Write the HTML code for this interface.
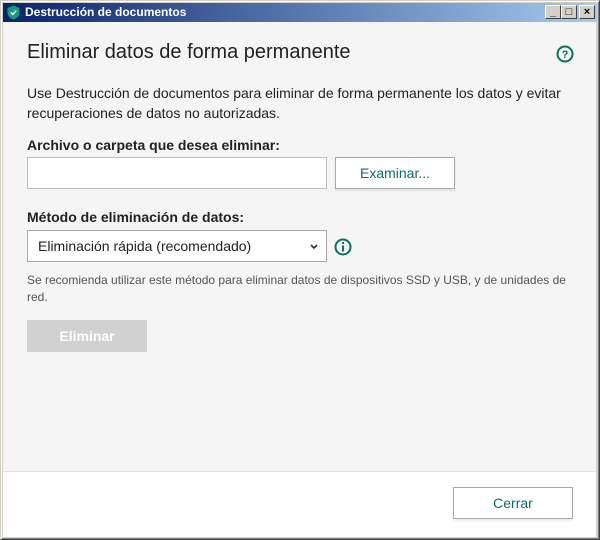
<!DOCTYPE html>
<html><head><meta charset="utf-8"><style>
*{box-sizing:border-box;margin:0;padding:0}
body{width:600px;height:540px;background:#d4d0c8;font-family:"Liberation Sans",sans-serif;position:relative;overflow:hidden}
.frame{position:absolute;left:0;top:0;width:600px;height:540px;border:1px solid #d4d0c8;border-right-color:#404040;border-bottom-color:#404040;box-shadow:inset 1px 1px 0 #fff,inset -1px -1px 0 #808080}
.title{position:absolute;left:3px;top:3px;width:594px;height:19px;background:linear-gradient(90deg,#0a246a,#a6caf0);color:#fff;font-weight:bold;font-size:12px;line-height:19px;padding-left:22px}
.shield{position:absolute;left:4px;top:2px}
.btns{position:absolute;right:2px;top:2px;display:flex;gap:0}
.wb{width:16px;height:14px;background:#d4d0c8;border:1px solid;border-color:#fff #404040 #404040 #fff;font-size:11px;color:#000;text-align:center;line-height:12px;font-weight:bold}
.content{position:absolute;left:3px;top:22px;width:593px;height:449px;background:#f5f5f5}
.footer{position:absolute;left:3px;top:471px;width:593px;height:66px;background:#fff;border-top:1px solid #e2e2e2}
.abs{position:absolute}
h1{position:absolute;left:27px;top:41px;font-size:20px;font-weight:normal;color:#222}
.t{color:#222;font-size:14px}
.input{background:#fff;border:1px solid #bdbdbd}
.btn{background:#fff;border:1px solid #a8a8a8;color:#0d6f69;font-size:14px;text-align:center;box-shadow:0 2px 2px rgba(0,0,0,.08)}
</style></head><body>
<div class="frame"></div>
<div class="title"><svg class="shield" width="13" height="15" viewBox="0 0 13 15"><path d="M6.5 0.5L12.5 3V8C12.5 11 9.5 13.5 6.5 14.5C3.5 13.5 0.5 11 0.5 8V3Z" fill="#1a9a7a"/><path d="M3.8 7.5L5.8 9.5L9.3 5.5" stroke="#fff" stroke-width="1.4" fill="none"/></svg>Destrucción de documentos
<div class="btns"><div class="wb">_</div><div class="wb" style="margin-right:2px">□</div><div class="wb">×</div></div></div>
<div class="content"></div>
<div class="footer"></div>
<h1>Eliminar datos de forma permanente</h1>
<svg class="abs" style="left:556px;top:45px" width="18" height="18" viewBox="0 0 18 18"><circle cx="9" cy="9" r="7.5" fill="none" stroke="#0d6f5c" stroke-width="2"/><text x="9" y="13" text-anchor="middle" font-size="11" font-weight="bold" fill="#0d6f5c" font-family="Liberation Sans">?</text></svg>
<div class="abs t" style="left:27px;top:83px;width:545px;line-height:20px">Use Destrucción de documentos para eliminar de forma permanente los datos y evitar recuperaciones de datos no autorizadas.</div>
<div class="abs t" style="left:27px;top:137px;font-weight:bold">Archivo o carpeta que desea eliminar:</div>
<div class="abs input" style="left:27px;top:157px;width:300px;height:32px"></div>
<div class="abs btn" style="left:335px;top:157px;width:120px;height:32px;line-height:30px">Examinar...</div>
<div class="abs t" style="left:27px;top:209px;font-weight:bold">Método de eliminación de datos:</div>
<div class="abs input" style="left:27px;top:230px;width:300px;height:32px;font-size:14px;line-height:30px;padding-left:10px;color:#222;border-color:#a8a8a8">Eliminación rápida (recomendado)<svg style="position:absolute;right:8px;top:13px" width="8" height="6" viewBox="0 0 8 6"><path d="M1 1L4 4L7 1" stroke="#333" stroke-width="1.6" fill="none"/></svg></div>
<svg class="abs" style="left:334px;top:238px" width="18" height="18" viewBox="0 0 18 18"><circle cx="9" cy="9" r="7.5" fill="none" stroke="#0d6f5c" stroke-width="2"/><rect x="8" y="4" width="2" height="2" fill="#0d6f5c"/><rect x="8" y="7.5" width="2" height="6" fill="#0d6f5c"/></svg>
<div class="abs" style="left:27px;top:272px;width:545px;font-size:12px;line-height:17px;color:#555">Se recomienda utilizar este método para eliminar datos de dispositivos SSD y USB, y de unidades de red.</div>
<div class="abs" style="left:27px;top:320px;width:120px;height:32px;background:#d1d1d1;color:#fff;font-size:14px;font-weight:bold;text-align:center;line-height:32px">Eliminar</div>
<div class="abs btn" style="left:453px;top:487px;width:120px;height:32px;line-height:30px">Cerrar</div>
</body></html>
